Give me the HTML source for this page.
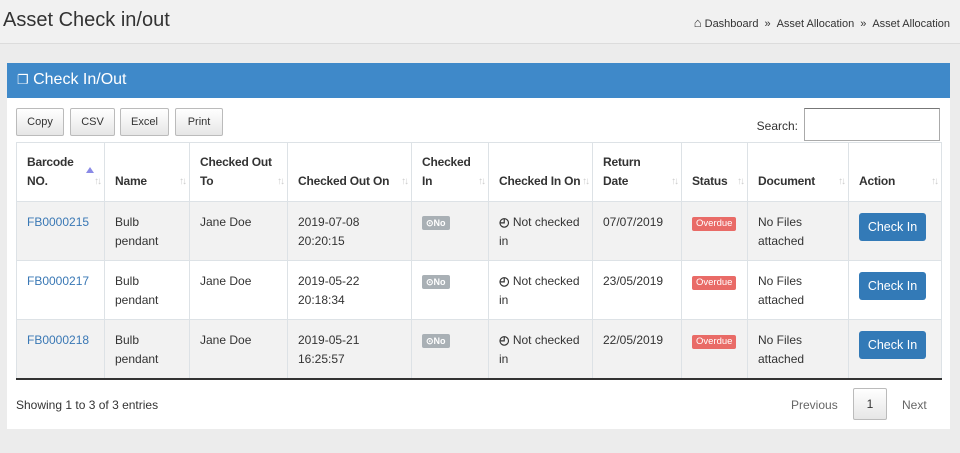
<!DOCTYPE html>
<html><head><meta charset="utf-8"><style>
*{box-sizing:border-box;margin:0;padding:0}
body{width:960px;height:453px;background:#ececec;font-family:"Liberation Sans",sans-serif;color:#333;position:relative;overflow:hidden}
.top{position:absolute;left:0;top:0;width:960px;height:44px;background:#f1f1f1;border-bottom:1px solid #dcdcdc}
.top h1{position:absolute;left:3px;top:9px;font-weight:normal;font-size:20px;color:#333}
.bc{position:absolute;right:10px;top:15px;font-size:11px;color:#333}
.bc b{font-weight:normal;margin:0 6px}
.panel{position:absolute;left:7px;top:63px;width:943px;height:366px;background:#fff}
.ph{height:35px;background:#3f89c9;color:#fff;font-size:16px;padding:8px 0 0 10px}
.btn{position:absolute;top:45px;height:28px;border:1px solid #bbb;border-radius:2px;background:linear-gradient(#fff,#e6e6e6);font-size:11px;text-align:center;line-height:26px}
.search{position:absolute;right:10px;top:45px;font-size:12px}
.search span{position:absolute;right:142px;top:11px;white-space:nowrap}
.search i{display:block;width:136px;height:33px;border:1px solid #aaa;border-top-color:#777}
table{position:absolute;left:9px;top:79px;border-collapse:collapse;font-size:12px;table-layout:fixed;width:925px}
td,th{border:1px solid #dde2e6;border-top:none;vertical-align:top;padding:0 0 0 10px;line-height:19px;position:relative;white-space:nowrap;overflow:visible}
tr{height:59px}
th{vertical-align:bottom;text-align:left;padding-bottom:10px;font-weight:bold;border-top:1px solid #dde2e6;letter-spacing:-0.2px}
th:after{content:"↑↓";position:absolute;right:4px;bottom:10px;font-size:10px;color:#ccc;font-weight:normal;letter-spacing:-2px}
th.s:before{content:"";position:absolute;right:10px;top:24px;border:4px solid transparent;border-bottom:6px solid #8a8ae6;border-top:0}
td{padding-top:11px}
tr.o td{background:#f2f2f2}
tr:last-child td{border-bottom:2px solid #333}
a{color:#3a78b5;text-decoration:none}
.no{display:inline-block;background:#a9b0b5;color:#fff;font-size:9px;font-weight:bold;padding:0 4px;border-radius:2px;line-height:14px;margin-top:3px}
.od{display:inline-block;background:#e96b67;color:#fff;font-size:9.5px;padding:0 4px;border-radius:2px;line-height:14px;margin-top:3px}
.ck{display:inline-block;background:#337ab7;color:#fff;border-radius:3px;width:67px;height:28px;line-height:28px;text-align:center;font-size:12.5px}
.ft{position:absolute;left:9px;top:335px;font-size:12px}
.pg{position:absolute;top:325px;font-size:12px;color:#666}
</style></head><body>
<div class="top"><h1>Asset Check in/out</h1>
<div class="bc"><span style="font-size:13px">&#8962;</span> Dashboard<b>»</b>Asset Allocation<b>»</b>Asset Allocation</div></div>
<div class="panel">
<div class="ph"><span style="font-size:13px">&#10064;</span> Check In/Out</div>
<div class="btn" style="left:9px;width:48px">Copy</div>
<div class="btn" style="left:63px;width:45px">CSV</div>
<div class="btn" style="left:113px;width:49px">Excel</div>
<div class="btn" style="left:168px;width:48px">Print</div>
<div class="search"><span>Search:</span><i></i></div>
<table>
<colgroup><col style="width:88px"><col style="width:85px"><col style="width:98px"><col style="width:124px"><col style="width:77px"><col style="width:104px"><col style="width:89px"><col style="width:66px"><col style="width:101px"><col style="width:93px"></colgroup>
<tr><th class="s">Barcode<br>NO.</th><th>Name</th><th>Checked Out<br>To</th><th>Checked Out On</th><th>Checked<br>In</th><th>Checked In On</th><th>Return<br>Date</th><th>Status</th><th>Document</th><th>Action</th></tr>
<tr class="o"><td><a>FB0000215</a></td><td>Bulb<br>pendant</td><td>Jane Doe</td><td>2019-07-08<br>20:20:15</td><td><span class="no">⊙No</span></td><td><b>◴</b> Not checked<br>in</td><td>07/07/2019</td><td><span class="od">Overdue</span></td><td>No Files<br>attached</td><td><span class="ck">Check In</span></td></tr>
<tr><td><a>FB0000217</a></td><td>Bulb<br>pendant</td><td>Jane Doe</td><td>2019-05-22<br>20:18:34</td><td><span class="no">⊙No</span></td><td><b>◴</b> Not checked<br>in</td><td>23/05/2019</td><td><span class="od">Overdue</span></td><td>No Files<br>attached</td><td><span class="ck">Check In</span></td></tr>
<tr class="o"><td><a>FB0000218</a></td><td>Bulb<br>pendant</td><td>Jane Doe</td><td>2019-05-21<br>16:25:57</td><td><span class="no">⊙No</span></td><td><b>◴</b> Not checked<br>in</td><td>22/05/2019</td><td><span class="od">Overdue</span></td><td>No Files<br>attached</td><td><span class="ck">Check In</span></td></tr>
</table>
<div class="ft">Showing 1 to 3 of 3 entries</div>
<div class="pg" style="left:784px;top:335px">Previous</div>
<div class="pg" style="left:846px;width:34px;height:32px;border:1px solid #bbb;border-radius:2px;background:linear-gradient(#fff,#e6e6e6);text-align:center;line-height:30px;color:#333">1</div>
<div class="pg" style="left:895px;top:335px">Next</div>
</div>
</body></html>
